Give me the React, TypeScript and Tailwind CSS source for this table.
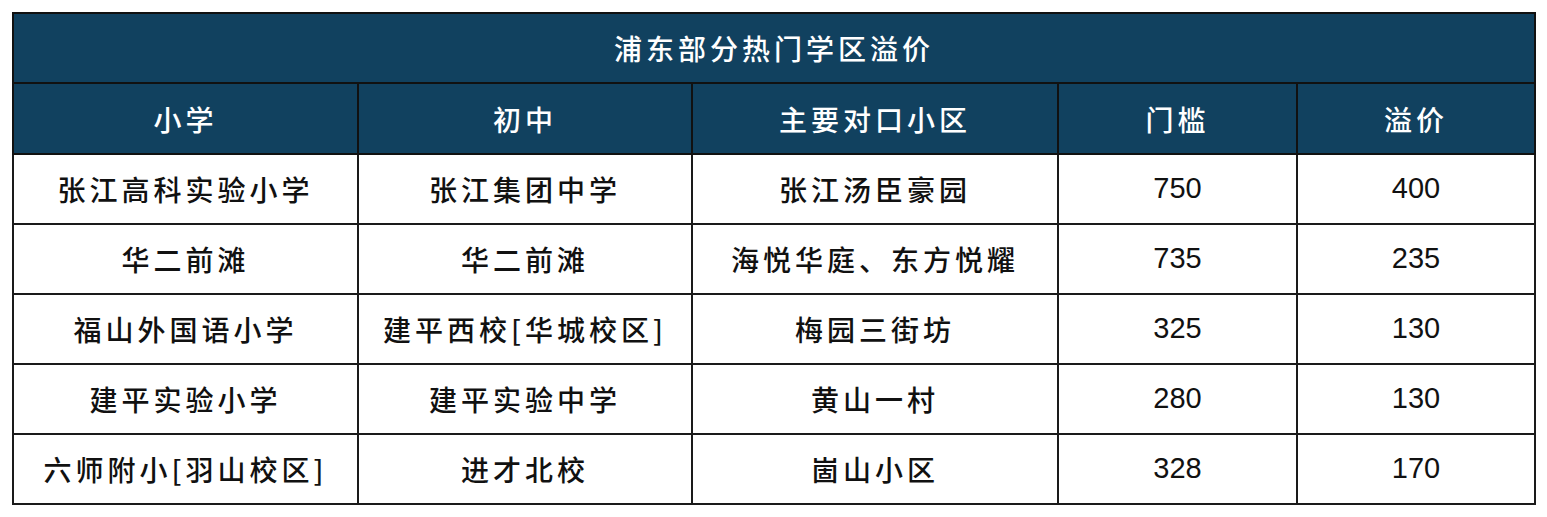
import React from "react";

const rows = [
  ["张江高科实验小学", "张江集团中学", "张江汤臣豪园", "750", "400"],
  ["华二前滩", "华二前滩", "海悦华庭、东方悦耀", "735", "235"],
  ["福山外国语小学", "建平西校[华城校区]", "梅园三街坊", "325", "130"],
  ["建平实验小学", "建平实验中学", "黄山一村", "280", "130"],
  ["六师附小[羽山校区]", "进才北校", "崮山小区", "328", "170"],
];

const headers = ["小学", "初中", "主要对口小区", "门槛", "溢价"];

const cjk = { fontFamily: '"Noto Sans CJK SC", "Noto Sans", sans-serif' };
const num = { fontFamily: '"Liberation Sans", Arial, sans-serif' };

export default function App() {
  return (
    <div className="w-[1547px] h-[517px] bg-white pt-[12px] pl-[12px]">
      <table className="border-collapse table-fixed w-[1522px]">
        <colgroup>
          <col className="w-[345px]" />
          <col className="w-[334px]" />
          <col className="w-[366px]" />
          <col className="w-[239px]" />
          <col className="w-[238px]" />
        </colgroup>
        <thead>
          <tr>
            <th
              colSpan={5}
              className="h-[70px] bg-[#11415f] border-2 border-[#111] text-white text-[28px] font-medium tracking-[4px] text-center p-0"
              style={cjk}
            >
              浦东部分热门学区溢价
            </th>
          </tr>
          <tr>
            {headers.map((h) => (
              <th
                key={h}
                className="h-[71px] bg-[#11415f] border-2 border-[#111] text-white text-[28px] font-medium tracking-[4px] text-center p-0"
                style={cjk}
              >
                {h}
              </th>
            ))}
          </tr>
        </thead>
        <tbody>
          {rows.map((r, i) => (
            <tr key={i}>
              {r.map((c, j) => (
                <td
                  key={j}
                  className={
                    j < 3
                      ? "h-[70px] border-2 border-[#1a1a1a] text-[#111] text-[28px] font-medium tracking-[4px] text-center p-0 whitespace-nowrap"
                      : "h-[70px] border-2 border-[#1a1a1a] text-[#111] text-[29px] text-center p-0"
                  }
                  style={j < 3 ? cjk : num}
                >
                  {c}
                </td>
              ))}
            </tr>
          ))}
        </tbody>
      </table>
    </div>
  );
}
